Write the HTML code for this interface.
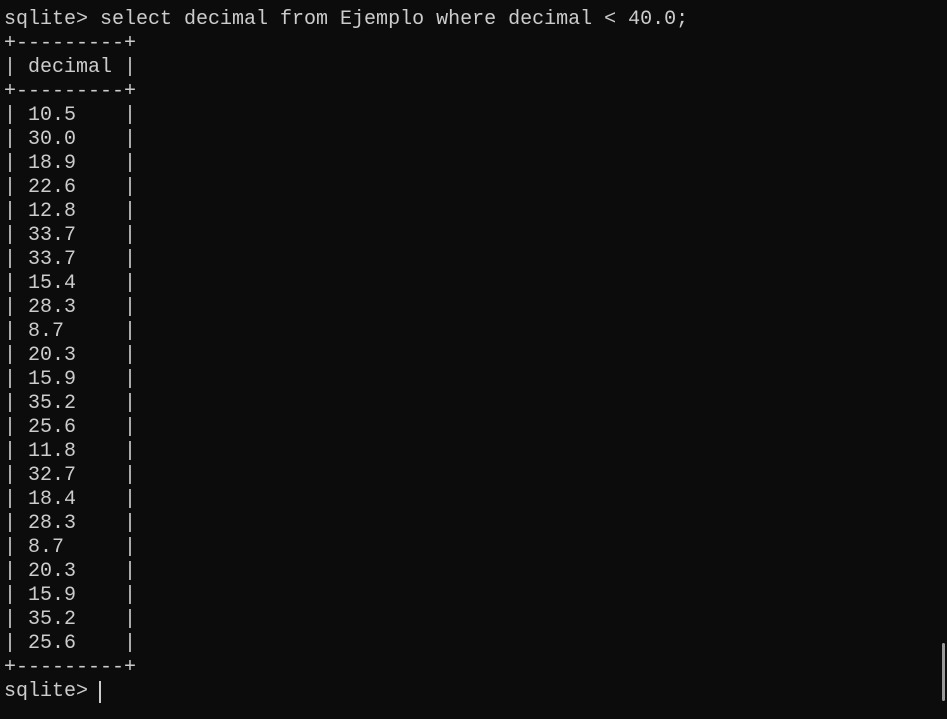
<!DOCTYPE html>
<html><head><style>
html,body{margin:0;padding:0;background:#0c0c0c;width:947px;height:719px;overflow:hidden}
pre{margin:0;position:absolute;left:4px;top:8px;font-family:"Liberation Mono",monospace;font-size:20px;line-height:24px;color:#cccccc;letter-spacing:0}
.cur{position:absolute;left:99px;top:681px;width:2px;height:22px;background:#cccccc}
.sb{position:absolute;left:942px;top:643px;width:3px;height:58px;background:#9a9a9a;border-radius:2px}
</style></head><body>
<pre>sqlite&gt; select decimal from Ejemplo where decimal &lt; 40.0;
+---------+
| decimal |
+---------+
| 10.5    |
| 30.0    |
| 18.9    |
| 22.6    |
| 12.8    |
| 33.7    |
| 33.7    |
| 15.4    |
| 28.3    |
| 8.7     |
| 20.3    |
| 15.9    |
| 35.2    |
| 25.6    |
| 11.8    |
| 32.7    |
| 18.4    |
| 28.3    |
| 8.7     |
| 20.3    |
| 15.9    |
| 35.2    |
| 25.6    |
+---------+
sqlite&gt; </pre>
<div class="cur"></div>
<div class="sb"></div>
</body></html>
